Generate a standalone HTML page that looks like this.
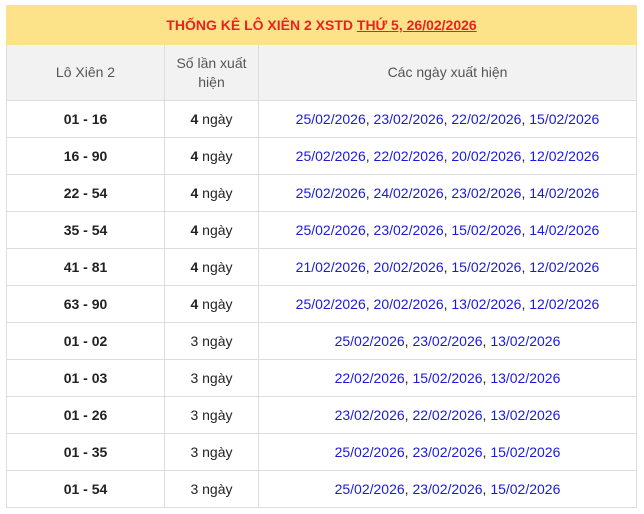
<!DOCTYPE html>
<html><head><meta charset="utf-8"><style>
body{margin:0;background:#fff;font-family:"Liberation Sans",Arial,sans-serif;}
table{position:absolute;left:6px;top:5px;width:631px;border-collapse:collapse;table-layout:fixed;}
td,th{border:1px solid #ddd;text-align:center;padding:0;}
.t{background:#fce38a;color:#e8221f;font-weight:bold;font-size:14px;height:38px;border-color:#fce38a;}
.t u{text-decoration:underline;}
.h th{background:#f2f2f2;color:#555;font-weight:normal;font-size:14px;height:55px;line-height:19px;}
tr.r td{height:36px;font-size:14px;color:#222;}
td.a{font-weight:bold;font-size:15px;}
td.b{font-size:13px;}
td.b b{font-weight:bold;}
td.c{color:#222;font-size:14px;}
td.c span{color:#1a1adb;}
</style></head><body>
<table>
<colgroup><col style="width:158px"><col style="width:94px"><col></colgroup>
<tr><td class="t" colspan="3">THỐNG KÊ LÔ XIÊN 2 XSTD <u>THỨ 5, 26/02/2026</u></td></tr>
<tr class="h"><th>Lô Xiên 2</th><th>Số lần xuất<br>hiện</th><th>Các ngày xuất hiện</th></tr>
<tr class="r"><td class="a">01 - 16</td><td class="b"><b>4</b> ngày</td><td class="c"><span>25/02/2026</span>, <span>23/02/2026</span>, <span>22/02/2026</span>, <span>15/02/2026</span></td></tr>
<tr class="r"><td class="a">16 - 90</td><td class="b"><b>4</b> ngày</td><td class="c"><span>25/02/2026</span>, <span>22/02/2026</span>, <span>20/02/2026</span>, <span>12/02/2026</span></td></tr>
<tr class="r"><td class="a">22 - 54</td><td class="b"><b>4</b> ngày</td><td class="c"><span>25/02/2026</span>, <span>24/02/2026</span>, <span>23/02/2026</span>, <span>14/02/2026</span></td></tr>
<tr class="r"><td class="a">35 - 54</td><td class="b"><b>4</b> ngày</td><td class="c"><span>25/02/2026</span>, <span>23/02/2026</span>, <span>15/02/2026</span>, <span>14/02/2026</span></td></tr>
<tr class="r"><td class="a">41 - 81</td><td class="b"><b>4</b> ngày</td><td class="c"><span>21/02/2026</span>, <span>20/02/2026</span>, <span>15/02/2026</span>, <span>12/02/2026</span></td></tr>
<tr class="r"><td class="a">63 - 90</td><td class="b"><b>4</b> ngày</td><td class="c"><span>25/02/2026</span>, <span>20/02/2026</span>, <span>13/02/2026</span>, <span>12/02/2026</span></td></tr>
<tr class="r"><td class="a">01 - 02</td><td class="b">3 ngày</td><td class="c"><span>25/02/2026</span>, <span>23/02/2026</span>, <span>13/02/2026</span></td></tr>
<tr class="r"><td class="a">01 - 03</td><td class="b">3 ngày</td><td class="c"><span>22/02/2026</span>, <span>15/02/2026</span>, <span>13/02/2026</span></td></tr>
<tr class="r"><td class="a">01 - 26</td><td class="b">3 ngày</td><td class="c"><span>23/02/2026</span>, <span>22/02/2026</span>, <span>13/02/2026</span></td></tr>
<tr class="r"><td class="a">01 - 35</td><td class="b">3 ngày</td><td class="c"><span>25/02/2026</span>, <span>23/02/2026</span>, <span>15/02/2026</span></td></tr>
<tr class="r"><td class="a">01 - 54</td><td class="b">3 ngày</td><td class="c"><span>25/02/2026</span>, <span>23/02/2026</span>, <span>15/02/2026</span></td></tr>
</table>
</body></html>
